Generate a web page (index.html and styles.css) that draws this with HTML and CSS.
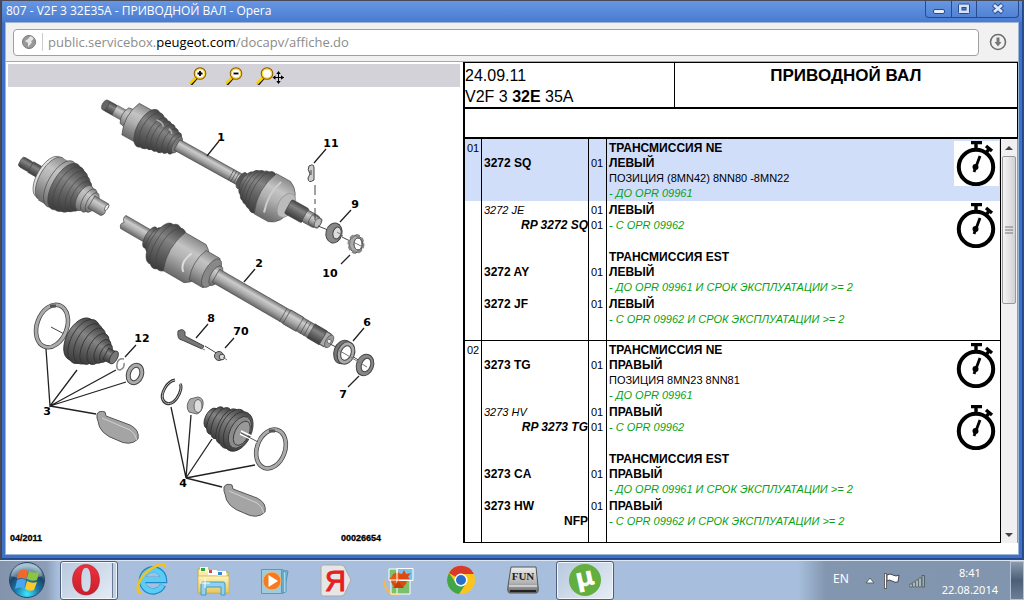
FILE: index.html
```html
<!DOCTYPE html>
<html lang="ru">
<head>
<meta charset="utf-8">
<title>807 - V2F 3 32E35A - ПРИВОДНОЙ ВАЛ</title>
<link rel="stylesheet" href="styles.css">
</head>
<body>
<svg class="defs" aria-hidden="true">
  <defs>
    <linearGradient id="steel" x1="0" y1="0" x2="0" y2="1"><stop offset="0" stop-color="#777"/><stop offset=".3" stop-color="#ccc"/><stop offset=".6" stop-color="#aaa"/><stop offset="1" stop-color="#666"/></linearGradient>
    <linearGradient id="dark" x1="0" y1="0" x2="0" y2="1"><stop offset="0" stop-color="#444"/><stop offset=".35" stop-color="#848484"/><stop offset=".65" stop-color="#606060"/><stop offset="1" stop-color="#3c3c3c"/></linearGradient>
    <linearGradient id="barrel" x1="0" y1="0" x2="0" y2="1"><stop offset="0" stop-color="#8b8b8b"/><stop offset=".3" stop-color="#c4c4c4"/><stop offset=".55" stop-color="#b0b0b0"/><stop offset="1" stop-color="#686868"/></linearGradient>
    <radialGradient id="orb" cx=".5" cy=".9" r=".8"><stop offset="0" stop-color="#3fe8ff"/><stop offset=".4" stop-color="#1a7fae"/><stop offset=".75" stop-color="#1b4468"/><stop offset="1" stop-color="#7fa8c0"/></radialGradient>
    <linearGradient id="red" x1="0" y1="0" x2="0" y2="1"><stop offset="0" stop-color="#f0303c"/><stop offset="1" stop-color="#c81e2c"/></linearGradient>
    <linearGradient id="folder" x1="0" y1="0" x2="0" y2="1"><stop offset="0" stop-color="#fdf3b8"/><stop offset="1" stop-color="#e6c663"/></linearGradient>
    <linearGradient id="metal" x1="0" y1="0" x2="0" y2="1"><stop offset="0" stop-color="#eee"/><stop offset=".6" stop-color="#b4b4b4"/><stop offset="1" stop-color="#666"/></linearGradient>
    <symbol id="watch" viewBox="0 0 45 45">
      <circle cx="22" cy="26" r="17.2" fill="#fff" stroke="#000" stroke-width="4"/>
      <path d="M17 1.500h11M22 2v7M32 5l6 5M35 8l-3 4" stroke="#000" stroke-width="3.400" fill="none"/>
      <path d="M26 15l-6 16" stroke="#000" stroke-width="2.800"/><circle cx="21.500" cy="26" r="3" fill="#000"/>
    </symbol>
    <symbol id="lens" viewBox="0 0 18 18"><path d="M2 17.500l7-8" stroke="#000" stroke-width="2.600"/><path d="M1 16.500l7-7" stroke="#f9d000" stroke-width="2.800"/><circle cx="11" cy="6.500" r="5.400" fill="#fff" stroke="#8a5a00" stroke-width="1.800"/><circle cx="11" cy="6.500" r="4.700" fill="none" stroke="#ffd930" stroke-width="1.200"/></symbol>
  </defs>
</svg>

<div class="window">
  <header class="titlebar">
    <h1 class="title">807 - V2F 3 32E35A - ПРИВОДНОЙ ВАЛ - Opera</h1>
    <div class="controls">
      <button class="control" aria-label="Свернуть"><svg width="14" height="14"><rect x="1.500" y="7.500" width="11" height="4" rx="1.500" fill="#e8eefa" stroke="#284b8c"/></svg></button>
      <button class="control" aria-label="Развернуть"><svg width="14" height="14"><rect x="1.500" y="2" width="11" height="9.500" rx="1" fill="#d5e1f6" stroke="#284b8c"/><rect x="5" y="5.500" width="4" height="2.500" fill="#4a7bd0" stroke="#284b8c"/></svg></button>
      <button class="control control-close" aria-label="Закрыть"><svg width="14" height="14"><path d="M2.500 2.500l9 8M11.500 2.500l-9 8" stroke="#284b8c" stroke-width="4.600"/><path d="M3 3l8 7M11 3l-8 7" stroke="#dde7f8" stroke-width="2.800"/></svg></button>
    </div>
  </header>

  <div class="frame">
    <div class="addressbar">
      <div class="address">
        <svg width="16" height="16"><circle cx="8" cy="8" r="6.500" fill="#999" stroke="#777"/><path d="M9 2.500c3 0 4 2 3 3l-2 2 1 1-4 4.500V9L4 7l3-2z" fill="#e5e5e5"/></svg>
        <a class="url" href="#">public.servicebox.<span class="domain">peugeot.com</span>/docapv/affiche.do</a>
      </div>
      <button class="download" aria-label="Загрузки"><svg width="18" height="18"><circle cx="9" cy="9" r="7.500" fill="none" stroke="#6e6e6e" stroke-width="1.600"/><path d="M7.500 4.500h3v4.500h2L9 13.500 5.500 9h2z" fill="#777"/></svg></button>
    </div>

    <main class="content">
      <section class="drawing-pane">
        <div class="zoombar">
          <button class="tool" aria-label="Увеличить"><svg width="18" height="18"><use href="#lens"/><path d="M8.500 6.500h5M11 4v5" stroke="#000" stroke-width="1.800"/></svg></button>
          <button class="tool" aria-label="Уменьшить"><svg width="18" height="18"><use href="#lens"/><path d="M8.500 6.500h5" stroke="#000" stroke-width="1.800"/></svg></button>
          <button class="tool" aria-label="Переместить"><svg width="28" height="18"><use href="#lens" width="18" height="18"/><path d="M22.500 5v11M17 10.500h11" stroke="#000"/><path d="M22.500 4l-2.200 3h4.400zM22.500 17l-2.200-3h4.400zM16.500 10.500l3-2.200v4.400zM28 10.500l-3-2.200v4.400z"/></svg></button>
        </div>
        <svg class="drawing" viewBox="8 87 452 466" preserveAspectRatio="xMinYMin meet" role="img" aria-label="Приводной вал">
          <g stroke="#444" stroke-width=".6">
            <g transform="translate(107 106) rotate(29)">
              <rect x="-3" y="-5.500" width="14" height="11" rx="3" fill="url(#dark)"/>
              <rect x="9" y="-6" width="18" height="12" fill="url(#steel)" stroke="none"/><ellipse cx="-2" cy="0" rx="3" ry="5.500" fill="#666"/>
              <path d="M20-9q-5 9 0 18l12 2v-22z" fill="url(#barrel)"/>
              <path d="M27-18q-8 18 0 36h19v-36z" fill="url(#barrel)"/>
              <ellipse cx="46" cy="0" rx="10" ry="21" fill="url(#dark)"/><ellipse cx="51" cy="0" rx="10" ry="20" fill="url(#dark)"/>
              <g fill="url(#dark)"><ellipse cx="57" cy="0" rx="8" ry="18"/><ellipse cx="62" cy="0" rx="8" ry="17"/><ellipse cx="67" cy="0" rx="7" ry="16"/><ellipse cx="72" cy="0" rx="6" ry="14"/><ellipse cx="77" cy="0" rx="5" ry="12"/></g>
              <path d="M50-12q8-1 9 3M65-10q4 0 5 3" fill="none" stroke="#aaa" stroke-width="1.500"/>
              <ellipse cx="80" cy="0" rx="4" ry="9" fill="#777"/><rect x="80" y="-6" width="73" height="12" fill="url(#steel)"/><path d="M142-6v12M145-6v12M148-6v12" fill="none"/>
              <ellipse cx="154" cy="0" rx="4" ry="9" fill="#555"/>
              <g fill="url(#dark)"><ellipse cx="160" cy="0" rx="6" ry="13"/><ellipse cx="164" cy="0" rx="7" ry="17"/><ellipse cx="168" cy="0" rx="8" ry="19"/><ellipse cx="173" cy="0" rx="9" ry="21"/><ellipse cx="178" cy="0" rx="10" ry="23"/></g>
              <path d="M181-23q-10 23 0 46h16q13-4 14-23-1-18-14-23z" fill="url(#barrel)"/><ellipse cx="205" cy="0" rx="8" ry="13" fill="#bbb" stroke="#888"/><path d="M189-18q-6 17 0 35" stroke="#ccc" stroke-width="2" fill="none"/>
              <rect x="207" y="-8" width="20" height="16" rx="2" fill="url(#dark)"/><rect x="226" y="-6.500" width="14" height="13" rx="2" fill="url(#steel)"/><rect x="232" y="-5.500" width="12" height="11" rx="3" fill="url(#steel)"/><ellipse cx="241" cy="0" rx="3" ry="5" fill="#bbb"/>
            </g>
            <g transform="translate(22 162) rotate(30)">
              <rect x="-2" y="-5.500" width="13" height="11" rx="3" fill="url(#dark)"/><rect x="10" y="-6" width="20" height="12" fill="url(#dark)"/>
              <ellipse cx="30" cy="0" rx="11" ry="23" fill="#ddd"/><ellipse cx="33" cy="0" rx="11" ry="24" fill="url(#barrel)"/><path d="M33-24h10v49H33z" fill="url(#barrel)" stroke="none"/>
              <g fill="url(#dark)"><ellipse cx="44" cy="0" rx="12" ry="26" fill="url(#barrel)"/><ellipse cx="49" cy="0" rx="12" ry="26"/><ellipse cx="54" cy="0" rx="12" ry="25"/><ellipse cx="59" cy="0" rx="11" ry="23"/><ellipse cx="64" cy="0" rx="9" ry="20"/><ellipse cx="68" cy="0" rx="8" ry="17"/></g>
              <ellipse cx="72" cy="0" rx="7" ry="14" fill="url(#barrel)"/><ellipse cx="77" cy="0" rx="6" ry="13" fill="url(#steel)"/><ellipse cx="81" cy="0" rx="5" ry="11" fill="url(#steel)"/>
              <path d="M80-7h16q3 3 0 7 3 3-1 7H80z" fill="url(#steel)"/><ellipse cx="96" cy="-3" rx="1.500" ry="3.500" fill="#eee"/>
            </g>
            <g transform="translate(125 223) rotate(30.100)">
              <path d="M-3-7h33v14H-1q-4-4 0-7-4-3-2-7z" fill="url(#steel)"/>
              <g fill="url(#dark)"><ellipse cx="29" cy="0" rx="5" ry="12"/><ellipse cx="34" cy="0" rx="6" ry="14"/><ellipse cx="41" cy="0" rx="10" ry="23"/><ellipse cx="47" cy="0" rx="11" ry="25"/><ellipse cx="53" cy="0" rx="11" ry="24"/></g>
              <path d="M57-22q-9 22 0 44h24q11-6 11-22t-11-22z" fill="url(#barrel)"/><path d="M73-7q-6 14 2 20" stroke="#ddd" stroke-width="2" fill="none"/>
              <path d="M84-17q-7 17 0 34h16q10-17 0-34z" fill="url(#barrel)"/><ellipse cx="100" cy="0" rx="7" ry="16" fill="#888"/><ellipse cx="105" cy="0" rx="5" ry="11" fill="url(#steel)"/>
              <rect x="105" y="-7.500" width="129" height="15" fill="url(#steel)"/><rect x="187" y="-8" width="15" height="16" fill="url(#steel)"/><path d="M183-7v15M207-7v15M211-7v15" fill="none"/><rect x="215" y="-8" width="14" height="16" fill="url(#dark)"/><rect x="229" y="-7" width="7" height="14" fill="#aaa"/><ellipse cx="236" cy="0" rx="3.500" ry="7" fill="#999"/><circle cx="236" cy="0" r="2" fill="#eee"/>
            </g>
          </g>
          <path d="M315 185v10M315 199v5M315 208v12M318 226l10 4M342 237l12 6M330 344l8 4M347 353l26 16M205 346l13 8M51 327l17 9" stroke="#444" fill="none"/>
          <g fill="#b0b0b0" stroke="#444"><path d="M309 166q5-3 5 2v12q-6 4-6-2l2-4q-3-5-1-8zM311 175v-5" fill="#ccc"/>
            <ellipse cx="334" cy="233" rx="8" ry="10" transform="rotate(15 334 233)" fill="#888"/><ellipse cx="337" cy="233" rx="4" ry="6" transform="rotate(15 337 233)" fill="#ddd"/>
            <ellipse cx="356" cy="244" rx="7" ry="8.500" fill="#aaa" stroke="#444" stroke-width="1"/><ellipse cx="356" cy="244" rx="7" ry="8.500" fill="none" stroke="#888" stroke-width="3" stroke-dasharray="4 2"/><ellipse cx="358" cy="244" rx="4" ry="6" fill="#fff"/>
            <ellipse cx="343" cy="352" rx="9" ry="12" transform="rotate(20 343 352)" fill="#777"/><ellipse cx="346" cy="353" rx="8.500" ry="11.500" transform="rotate(20 346 353)" fill="#aaa"/><ellipse cx="346" cy="353" rx="5" ry="7.500" transform="rotate(20 346 353)" fill="#fff"/>
            <ellipse cx="365" cy="365" rx="8.500" ry="11" transform="rotate(20 365 365)" fill="#888"/><ellipse cx="366" cy="365" rx="4.500" ry="7" transform="rotate(20 366 365)" fill="#fff"/>
            <path d="M178 331q5-3 7 1l0 4 19 10-2 3-20-9q-5 0-4-9z" fill="#777"/><circle cx="219" cy="356" r="4.500" fill="#999"/><circle cx="222" cy="357" r="2.800" fill="#ddd"/>
          </g>
          <path d="M338 350l9 5 20 12M337 232l6 4M355 243l8 4M201 348l4 2M223 357l4 3" stroke="#777" fill="none"/>
          <g fill="none"><g transform="rotate(20 52 326)"><ellipse cx="52" cy="326" rx="15" ry="22" stroke="#444" stroke-width="4.500"/><ellipse cx="52" cy="326" rx="15" ry="22" stroke="#aaa" stroke-width="3"/></g><path d="M50 306h6" stroke="#555" stroke-width="3"/>
            <g transform="rotate(20 271 449)"><ellipse cx="271" cy="449" rx="14" ry="20" stroke="#444" stroke-width="4.500"/><ellipse cx="271" cy="449" rx="14" ry="20" stroke="#aaa" stroke-width="3"/></g><path d="M269 431h6" stroke="#555" stroke-width="3"/>
            <path d="M124 359q-6-1-7 5t3 6q5-2 4-7" stroke="#888" stroke-width="1.500"/>
            <g transform="rotate(20 135 374)"><ellipse cx="135" cy="374" rx="6.500" ry="9" stroke="#444" stroke-width="5"/><ellipse cx="135" cy="374" rx="6.500" ry="9" stroke="#aaa" stroke-width="3"/></g>
            <path d="M175 380c-8 1-15 14-12 20s10 4 14-2 5-12 3-14" stroke="#333" stroke-width="3"/><path d="M175 380c-8 1-15 14-12 20s10 4 14-2 5-12 3-14" stroke="#bbb" stroke-width="1"/>
          </g>
          <g transform="translate(83 341) rotate(28)" stroke="#333" stroke-width=".8" fill="url(#dark)"><ellipse cx="-4" cy="0" rx="13" ry="23"/><ellipse cx="1" cy="0" rx="13" ry="24"/><ellipse cx="6" cy="0" rx="12" ry="22"/><ellipse cx="11" cy="0" rx="10" ry="20"/><ellipse cx="17" cy="0" rx="9" ry="17"/><ellipse cx="22" cy="0" rx="7" ry="13"/><ellipse cx="26" cy="0" rx="5" ry="10"/><path d="M26-6h9v13h-9z"/><ellipse cx="35" cy="0" rx="3.500" ry="7" fill="#777"/></g>
          <g transform="translate(231 428) rotate(26)" stroke="#333" stroke-width=".8" fill="url(#dark)"><ellipse cx="-22" cy="0" rx="6" ry="11"/><ellipse cx="-17" cy="0" rx="7" ry="15"/><ellipse cx="-11" cy="0" rx="8" ry="17"/><ellipse cx="-4" cy="0" rx="9" ry="19"/><ellipse cx="2" cy="0" rx="12" ry="21"/><ellipse cx="8" cy="0" rx="13" ry="21"/><ellipse cx="10" cy="0" rx="10" ry="17" fill="#8a8a8a"/><ellipse cx="12" cy="0" rx="7" ry="13" fill="#999"/></g>
          <path d="M241 431l17 8M240 434l17 8" stroke="#fff" stroke-width="1.500"/><path d="M241 433l17 9" stroke="#555"/>
          <path d="M190 399l8-2q6 1 5 8t-6 9l-8-2q-4-6 1-13z" fill="#aaa" stroke="#666"/><ellipse cx="198" cy="406" rx="4" ry="6.500" fill="#ddd" stroke="#666"/>
          <g id="grease"><path d="M97 414q2-4 8-2l1 4 24 9q10 5 8 14-8 8-21 1-18-6-19-19l-1-3z" fill="#a4a4a4" stroke="#555"/><path d="M102 418l28 12q5 3 7 10" stroke="#d0d0d0" fill="none"/></g>
          <use href="#grease" x="127" y="73"/>
          <path d="M46 349l4 57 27-36M50 406l66-36M50 406l76-24M50 406l46 8M171 407l15 71 5-63M186 478l26-39M186 478l69-13M186 478l36 9M219 141l-12 15M326 149l-12 14M351 210l-11 12M341 264l9-9M255 269l-11 13M208 324l-12 14M234 338l-9 10M136 345l-11 12M364 328l-11 13M348 387l11-11" stroke="#222" stroke-width="1.300" fill="none"/>
          <g class="callouts" text-anchor="middle"><text x="221" y="141">1</text><text x="331" y="147">11</text><text x="355" y="208">9</text><text x="330" y="277">10</text><text x="259" y="267">2</text><text x="211" y="322">8</text><text x="241" y="335">70</text><text x="142" y="342">12</text><text x="367" y="326">6</text><text x="343" y="398">7</text><text x="47" y="415">3</text><text x="183" y="487">4</text></g>
          <g class="plate"><text x="10" y="541">04/2011</text><text x="341" y="541">00026654</text></g>
        </svg>
      </section>

      <section class="parts-pane">
        <div class="sheet-head">
          <div class="sheet-code"><div>24.09.11</div><div>V2F 3 <b>32E</b> 35A</div></div>
          <h2 class="sheet-title">ПРИВОДНОЙ ВАЛ</h2>
        </div>
        <div class="sheet-note"></div>
        <div class="list">
          <table class="parts">
            <colgroup><col class="c-num"><col class="c-ref"><col class="c-qty"><col></colgroup>
            <tbody>
              <tr class="r-main selected"><td class="num">01</td><td><br><b>3272 SQ</b></td><td class="num"><br>01</td><td><div class="desc"><div><b>ТРАНСМИССИЯ NE</b><br><b>ЛЕВЫЙ</b><br>ПОЗИЦИЯ (8MN42) 8NN80 -8MN22<br><i class="cond">- ДО OPR 09961</i></div><svg class="watch"><use href="#watch"/></svg></div></td></tr>
              <tr class="r-sub"><td></td><td><i>3272 JE</i><div class="repl"><i>RP 3272 SQ</i></div></td><td class="num">01<br>01</td><td><div class="desc"><div><b>ЛЕВЫЙ</b><br><i class="cond">- С OPR 09962</i></div><svg class="watch"><use href="#watch"/></svg></div></td></tr>
              <tr class="r-sub"><td></td><td><br><b>3272 AY</b></td><td class="num"><br>01</td><td><b>ТРАНСМИССИЯ EST</b><br><b>ЛЕВЫЙ</b><br><i class="cond">- ДО OPR 09961 И СРОК ЭКСПЛУАТАЦИИ &gt;= 2</i></td></tr>
              <tr class="r-last"><td></td><td><b>3272 JF</b></td><td class="num">01</td><td><b>ЛЕВЫЙ</b><br><i class="cond">- С OPR 09962 И СРОК ЭКСПЛУАТАЦИИ &gt;= 2</i></td></tr>
            </tbody>
            <tbody>
              <tr class="r-main"><td class="num">02</td><td><br><b>3273 TG</b></td><td class="num"><br>01</td><td><div class="desc"><div><b>ТРАНСМИССИЯ NE</b><br><b>ПРАВЫЙ</b><br>ПОЗИЦИЯ 8MN23 8NN81<br><i class="cond">- ДО OPR 09961</i></div><svg class="watch"><use href="#watch"/></svg></div></td></tr>
              <tr class="r-sub"><td></td><td><i>3273 HV</i><div class="repl"><i>RP 3273 TG</i></div></td><td class="num">01<br>01</td><td><div class="desc"><div><b>ПРАВЫЙ</b><br><i class="cond">- С OPR 09962</i></div><svg class="watch"><use href="#watch"/></svg></div></td></tr>
              <tr class="r-sub"><td></td><td><br><b>3273 CA</b></td><td class="num"><br>01</td><td><b>ТРАНСМИССИЯ EST</b><br><b>ПРАВЫЙ</b><br><i class="cond">- ДО OPR 09961 И СРОК ЭКСПЛУАТАЦИИ &gt;= 2</i></td></tr>
              <tr class="r-last"><td></td><td><b>3273 HW</b><div class="repl">NFP</div></td><td class="num">01</td><td><b>ПРАВЫЙ</b><br><i class="cond">- С OPR 09962 И СРОК ЭКСПЛУАТАЦИИ &gt;= 2</i></td></tr>
            </tbody>
          </table>
          <div class="scrollbar">
            <button class="arrow" aria-label="Вверх"><svg width="8" height="4"><path d="M0 4l4-4 4 4z" fill="#444"/></svg></button>
            <div class="track"><div class="thumb"><svg width="8" height="8"><path d="M0 1h8M0 4h8M0 7h8" stroke="#777"/></svg></div></div>
            <button class="arrow" aria-label="Вниз"><svg width="8" height="4"><path d="M0 0l4 4 4-4z" fill="#444"/></svg></button>
          </div>
        </div>
      </section>
    </main>
  </div>
</div>

<footer class="taskbar">
  <button class="start" aria-label="Пуск"><svg width="38" height="38" viewBox="8 562 38 38"><circle cx="27" cy="580" r="17.500" fill="url(#orb)" stroke="#2a4866"/><path d="M11 576q2-12 16-13 13 1 15 13-14 6-31 0z" fill="#fff" opacity=".3"/><path d="M19 571q4-3 9 0l-2 8q-4-2-9 0z" fill="#f2682a"/><path d="M29 571q5 3 10 1l-2 8q-5 2-10-1z" fill="#8cc63f"/><path d="M17 580q4-2 9 0l-2 9q-4-3-9 0z" fill="#4aa6ee"/><path d="M27 581q5 3 10 1l-3 8q-4 2-9-1z" fill="#fdc829"/></svg></button>
  <nav class="apps">
    <button class="app app-open app-stack" aria-label="Opera"><svg viewBox="60 562 58 38"><path fill-rule="evenodd" d="M86 564.500c8 0 13.500 7 13.500 15.500S94 595 86 595s-13.500-6.500-13.500-15 5.500-15.500 13.500-15.500zm0 3c-4 0-5 6-5 12.500s1 12 5 12 5-5.500 5-12-1-12.500-5-12.500z" fill="url(#red)" stroke="#b01522" stroke-width=".5"/></svg></button>
    <button class="app" aria-label="Internet Explorer"><svg viewBox="122 562 58 38"><path d="M163 585a11 11 0 1 1 1-5h-20" fill="none" stroke="#1e88c8" stroke-width="6.500"/><path d="M162.500 585a10.500 10.500 0 1 1 1-5.500h-20" fill="none" stroke="#5cccf5" stroke-width="5"/><path d="M141 593c-7-2-2-15 7-22s18-9 17-3" fill="none" stroke="#f2c21d" stroke-width="2.800"/></svg></button>
    <button class="app" aria-label="Проводник"><svg viewBox="184 562 58 38"><path d="M198 569h11l2 3h17v21h-30z" fill="url(#folder)" stroke="#c7a544"/><path d="M200 567h8v5h-8z" fill="#fff6cc"/><path d="M201 568h4v3h-4z" fill="#2da83c"/><path d="M208 570h9v5h-9z" fill="#fff"/><path d="M209 570h3v3h-3z" fill="#d64a30"/><path d="M217 571h9v6h-9z" fill="#fff"/><path d="M218 572h4v3h-4z" fill="#2d8ad0"/><path d="M198 576h31v17h-31z" fill="url(#folder)" stroke="#cdb050" stroke-width=".7"/><path d="M201 595v-11q0-2 2-2h20q2 0 2 2v11h-4v-8h-15v8z" fill="#8fd2ef" stroke="#4898c0"/><path d="M205 577v11M200 583h10" stroke="#fff"/></svg></button>
    <button class="app" aria-label="Windows Media"><svg viewBox="246 562 58 38"><path d="M270 570l18 1-4 22h-14z" fill="#8cc2e0" stroke="#4c92b8"/><path d="M266 569.500h17v23h-17zM283 571l3 1v20l-3 1z" fill="#acd5e9" stroke="#579bbb"/><path d="M261.500 569.500h20v24h-20z" fill="#9dccdf" stroke="#579bbb"/><circle cx="272" cy="581" r="9" fill="#f47b20" stroke="#fcb36c"/><path d="M268.500 575l9.500 6-9.500 6z" fill="#fff"/></svg></button>
    <button class="app" aria-label="Яндекс"><svg viewBox="308 562 58 38"><path d="M323 565h18q3 0 4 3l6 12-6 13q-1 3-4 3h-18q-2 0-2-2v-27q0-2 2-2z" fill="#e6e6e6" stroke="#aaa"/><text x="325" y="591" class="ya">Я</text></svg></button>
    <button class="app" aria-label="Фотографии"><svg viewBox="370 562 58 38"><path d="M385 579q0 13 12 14l6-1q-10 8-17-2-4-5-1-11z" fill="#f8b84c"/><path d="M389 569h15v11h-15zM391 580h19v14h-19z" fill="#7cc06c" stroke="#fff"/><circle cx="399" cy="580" r="8" fill="#d94e10"/><path d="M397 568.500h16v12h-16z" fill="#7ac2ea" stroke="#fff"/><path d="M398 573l4 1 2-4 2 4 5-1-3 4 3 3h-13z" fill="#e04810"/><path d="M389 579l10-7v14z" fill="#e65b14"/><path d="M397 568.500v25M389 580h22" stroke="#fff"/><path d="M393 588l5-7 6 7" fill="#c73c0a"/></svg></button>
    <button class="app" aria-label="Chrome"><svg viewBox="432 562 58 38"><circle cx="461" cy="580" r="14" fill="#fcc51c"/><path d="M461 580l-12-7a14 14 0 0 1 25 1h-13z" fill="#d93a2c"/><path d="M449 573l7 10 9 2-6 9a14 14 0 0 1-10-21z" fill="#42a548"/><circle cx="461" cy="580" r="6.500" fill="#fff"/><circle cx="461" cy="580" r="5" fill="#2a70c8"/></svg></button>
    <button class="app" aria-label="FUN"><svg viewBox="494 562 58 38"><path d="M511 567h25l2 19q1 7-2 7h-26q-3 0-2-7z" fill="url(#metal)" stroke="#555"/><path d="M509 586h28" stroke="#fff"/><path d="M510 591h26" stroke="#222" stroke-width="2"/><text x="523" y="580" text-anchor="middle" class="fun">FUN</text></svg></button>
    <button class="app app-open" aria-label="µTorrent"><svg viewBox="556 562 58 38"><circle cx="585" cy="580" r="16" fill="#62ae3e"/><text x="585" y="586" text-anchor="middle" class="mu" transform="rotate(-12 585 580)">µ</text></svg></button>
  </nav>
  <div class="tray">
    <span class="lang">EN</span>
    <button class="tray-item" aria-label="Скрытые значки"><svg width="10" height="7"><path d="M1 6l4-5 4 5z" fill="#fff" stroke="#566"/></svg></button>
    <button class="tray-item" aria-label="Центр поддержки"><svg width="18" height="18"><path d="M2.500 1.500v15" stroke="#333" stroke-width="3"/><path d="M4 3q3-2 6 0t6 0l-1 7q-3 1-6-1t-5 0z" fill="#fff" stroke="#445"/><path d="M2.500 2v14" stroke="#fff" stroke-width="1.500"/></svg></button>
    <button class="tray-item" aria-label="Сеть"><svg width="17" height="14"><g fill="#f2f6fa" stroke="#455" stroke-width=".8"><path d="M1 10h2v3H1zM4 8h2v5H4zM7 6h2v7H7zM10 4h2v9h-2z"/><path d="M13 1.500h2.500V13H13z" fill="#9ab"/></g></svg></button>
    <time class="clock">8:41<br>22.08.2014</time>
  </div>
  <button class="show-desktop" aria-label="Свернуть все окна"></button>
</footer>
</body>
</html>
```

FILE: styles.css
```css
* { box-sizing: border-box; }
body {
  margin: 0;
  min-height: 100vh;
  padding-top: 1px;
  display: flex;
  flex-direction: column;
  background: #484b55;
  font: 11px/15px "Liberation Sans", Arial, sans-serif;
  color: #000;
}
button { margin: 0; padding: 0; border: 0; background: none; font: inherit; display: flex; align-items: center; justify-content: center; }
svg { display: block; }
.defs { position: absolute; width: 0; height: 0; }

.window {
  flex: 1;
  margin: 0 1px 1px;
  padding: 0 3px 3px;
  border: solid #24488f;
  border-width: 0 1px 1px;
  background: #3f71c6;
  display: flex;
  flex-direction: column;
}
.titlebar {
  height: 21px;
  margin: 0 -3px;
  padding-left: 4px;
  display: flex;
  justify-content: space-between;
  background: linear-gradient(#6797e2, #4a7bd0);
}
.title { margin: 0; color: #fff; font: 12px/20px "Open Sans", sans-serif; }
.controls { display: flex; height: 17px; margin-right: 3px; border: 1px solid #28498a; border-top: 0; border-radius: 0 0 4px 4px; }
.control { width: 25px; border-left: 1px solid #28498a; }
.control:first-child { border-left: 0; }
.control-close { width: 42px; }

.frame { flex: 1; border: 1px solid #a0b4d4; background: #fff; display: flex; flex-direction: column; }
.addressbar { display: flex; align-items: center; gap: 10px; height: 39px; padding: 0 11px 0 7px; background: #f1f1f1; border-bottom: 1px solid #a8a8a8; }
.address { flex: 1; height: 27px; display: flex; align-items: center; gap: 5px; padding-left: 7px; background: #fff; border: 1px solid #a0a0a0; border-radius: 4px; }
.url { border-left: 1px solid #ccc; padding-left: 5px; font: 13px/18px "Open Sans", sans-serif; color: #8c8c8c; text-decoration: none; }
.domain { color: #000; }

.content { flex: 1; display: grid; grid-template-columns: 457fr 555fr; }
.drawing-pane { padding: 2px 3px 0 2px; display: flex; flex-direction: column; }
.zoombar { height: 23px; background: #d2d2d8; display: flex; justify-content: center; gap: 8px; }
.tool { width: 28px; }
.drawing { width: 100%; }
.callouts { font: bold 11px "DejaVu Sans", sans-serif; }
.plate { font: bold 9px "Liberation Sans", sans-serif; stroke: #000; stroke-width: .3px; }

.parts-pane { border-left: 2px solid #000; display: flex; flex-direction: column; align-self: start; }
.sheet-head { display: grid; grid-template-columns: 210fr 343fr; border: solid #000; border-width: 1px 1px 2px 0; font-size: 16px; line-height: 21px; }
.sheet-code { padding: 2px 0 0; border-right: 1px solid #000; height: 44px; }
.sheet-title { margin: 0; padding-top: 2px; font-size: 17px; line-height: 21px; text-align: center; }
.sheet-note { height: 30px; border: solid #000; border-width: 0 1px 2px 0; }
.list { display: flex; border-right: 1px solid #999; }
.parts { flex: 1; border-collapse: separate; border-spacing: 0; table-layout: fixed; border-right: 1px solid #000; }
.c-num { width: 17px; }
.c-ref { width: 107px; }
.c-qty { width: 18px; }
.parts td { padding: 2px 0 0 2px; line-height: 15px; vertical-align: top; border-right: 1px solid #000; }
.parts td:last-child { border-right: 0; }
.parts b { font-size: 12px; }
.r-main { height: 62px; }
.r-sub { height: 47px; }
.r-last { height: 46px; }
.r-last td { border-bottom: 1px solid #000; }
.selected { background: #d0defa; }
.repl { text-align: right; font-size: 12px; font-weight: bold; }
.cond { color: #0a9f14; }
.desc { display: flex; justify-content: space-between; }
.watch { width: 45px; height: 45px; margin-right: 1px; background: #fff; }

.scrollbar { width: 16px; display: flex; flex-direction: column; background: #f0f0f0; }
.arrow { height: 17px; }
.track { flex: 1; }
.thumb { height: 40%; margin: 0 1px; display: flex; align-items: center; justify-content: center; border: 1px solid #999; border-radius: 2px; background: linear-gradient(90deg, #f5f5f5, #d2d2d6); }

.taskbar {
  height: 40px;
  display: flex;
  align-items: stretch;
  border-top: 1px solid #dce6f2;
  background: linear-gradient(90deg, #8293ab 0, #8b9db7 46px, #a7bfdd 58px, #a7bfdd calc(100% - 226px), #8396b0 calc(100% - 198px), #8295ae);
}
.start { padding: 0 14px 0 8px; }
.apps { display: flex; gap: 4px; flex: 1; }
.app { width: 58px; border: 1px solid transparent; border-radius: 3px; }
.app svg { width: 58px; height: 38px; flex: none; }
.app-open { border-color: #4d5f7a; background: linear-gradient(135deg, #b8c8de, #e6edf6); box-shadow: inset 0 0 0 1px #f2f6fb; }
.app-stack { box-shadow: inset 0 0 0 1px #f2f6fb, inset -4px 0 #c2d0e2, inset -5px 0 #687a96; }
.ya { font: 29px "Liberation Sans", sans-serif; fill: #e52020; stroke: #e52020; }
.fun { font: bold 11px "Liberation Serif", serif; fill: #222; }
.mu { font: bold 26px/28px "DejaVu Sans", sans-serif; fill: #fff; }
.tray { display: flex; align-items: center; gap: 8px; padding-right: 12px; color: #fff; font: 12px/17px "Noto Sans", sans-serif; }
.lang { margin: 0 8px 4px 0; }
.clock { margin-left: 8px; text-align: center; font-size: 11px; }
.show-desktop { width: 14px; border: 1px solid #b3c2d4; background: linear-gradient(#8b99ab, #4b5f77 50%, #6b7e95); }
```
